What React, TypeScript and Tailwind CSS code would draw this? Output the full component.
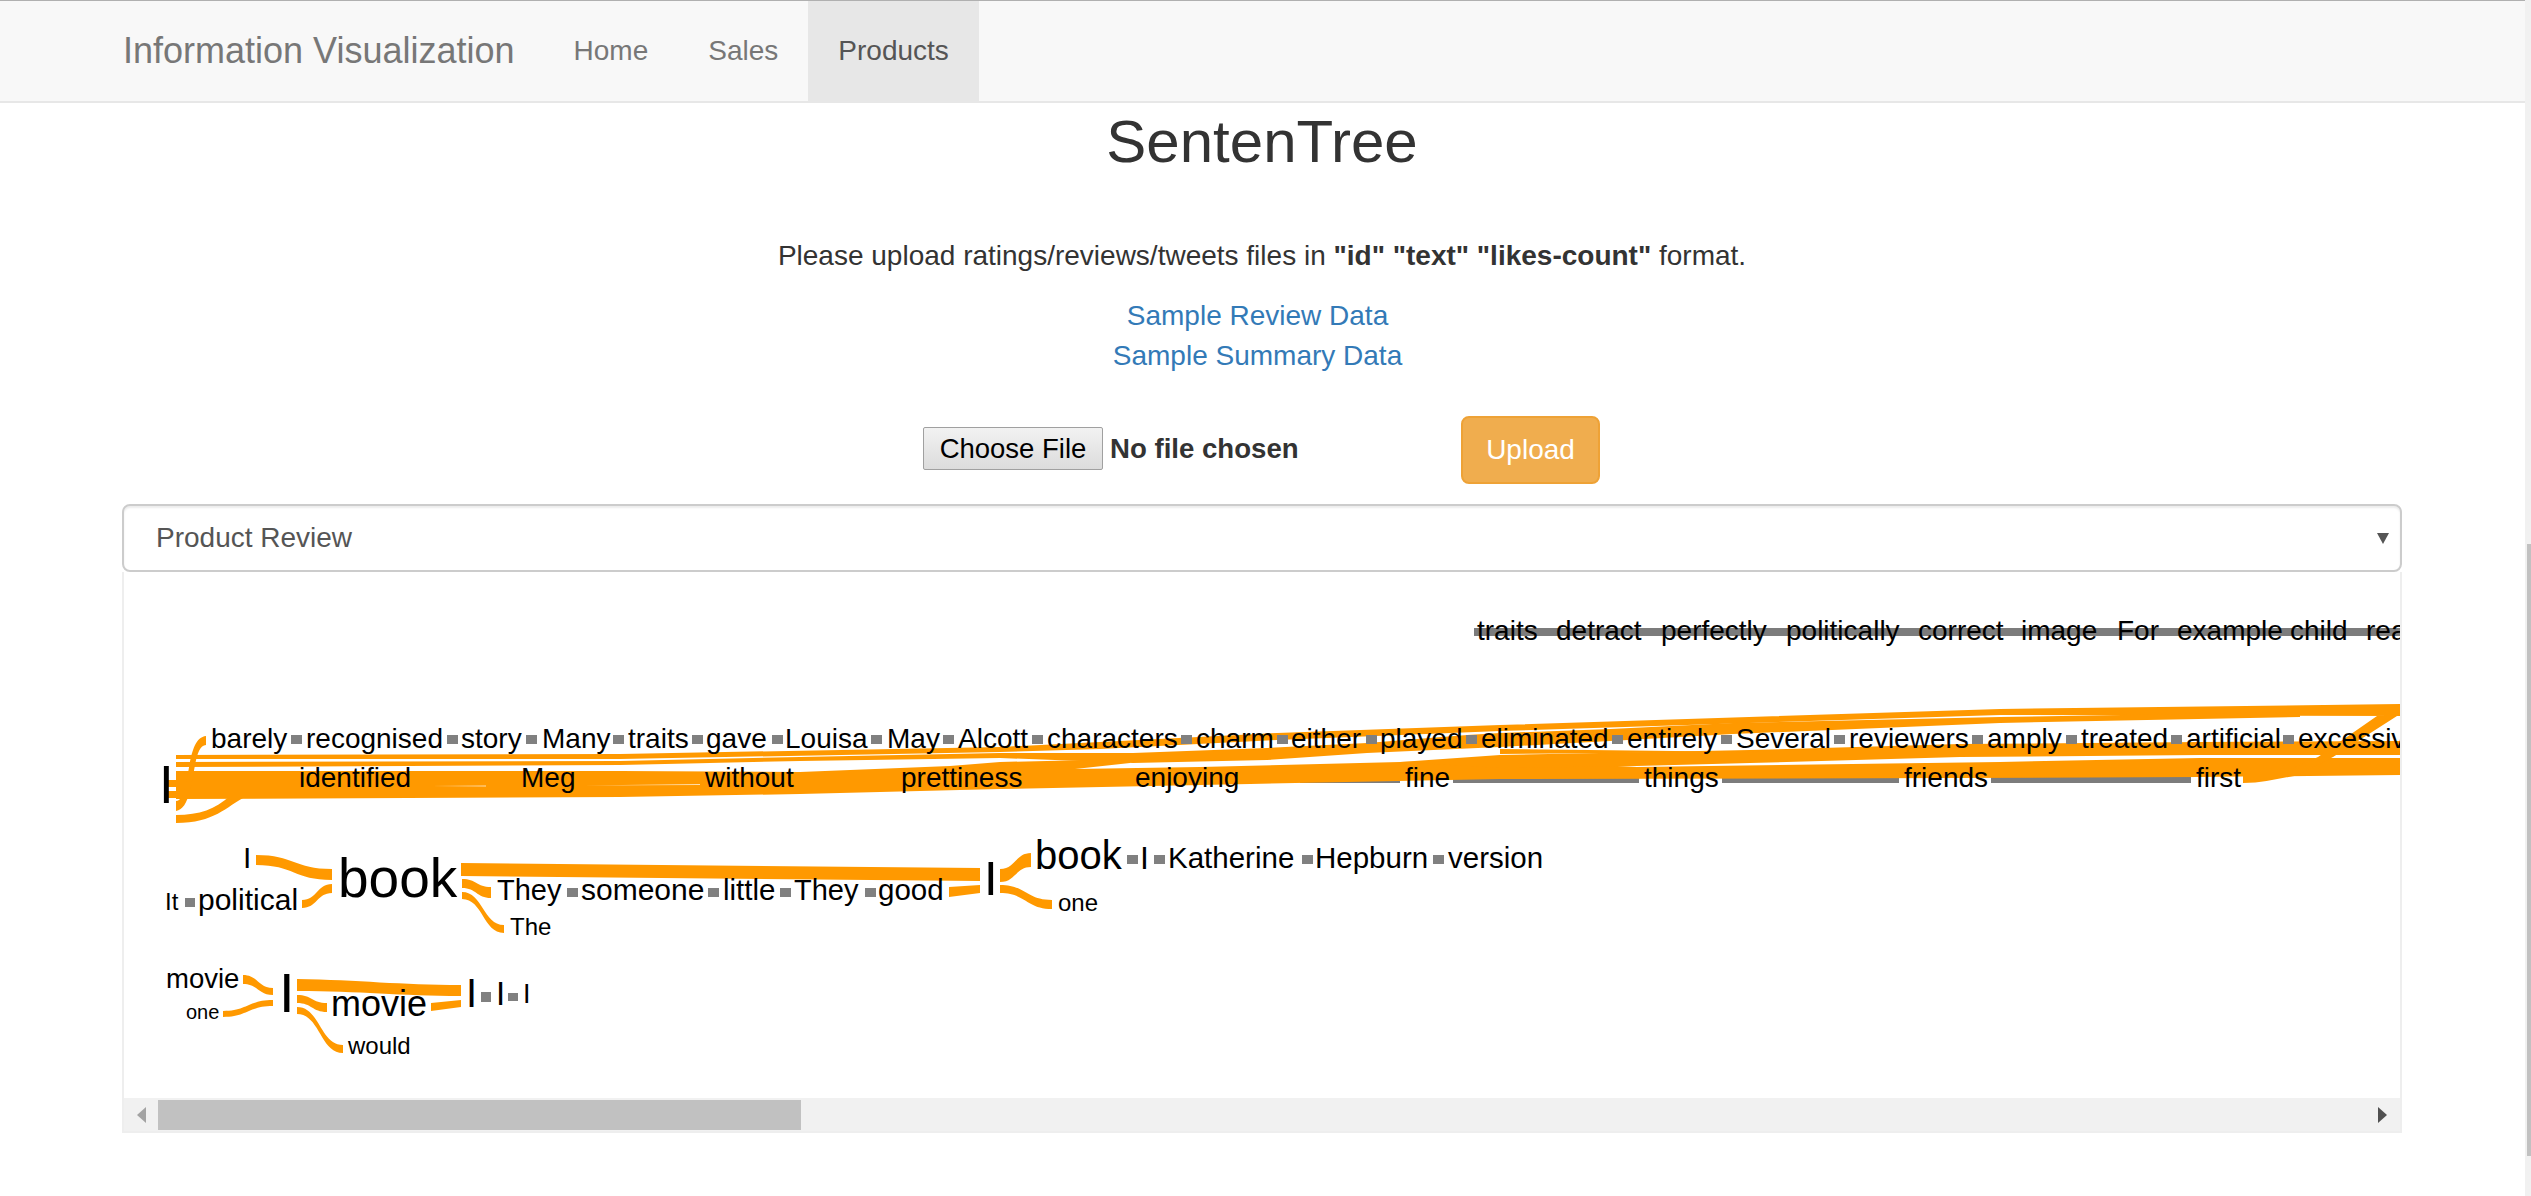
import React from 'react';

const ORANGE = '#ff9900';
const GREY = '#7c7c7c';

// S-curved ribbon between two vertical edges
const ribbon = (x0: number, a0: number, b0: number, x1: number, a1: number, b1: number) => {
    const m = (x0 + x1) / 2;
    return `M${x0} ${a0}C${m} ${a0} ${m} ${a1} ${x1} ${a1}L${x1} ${b1}C${m} ${b1} ${m} ${b0} ${x0} ${b0}Z`;
};

const bands: string[] = [
    // thin top band
    '176,755 620,754 1000,747 1100,742 1277,733 1500,725 2000,709 2400,704 2400,716 2000,715 1500,731 1277,740 1100,749 1000,752 620,759 176,759',
    // second band
    '176,762 620,761 800,757 1000,753 1133,753 1267,748 1367,743 1467,735 1500,733 1610,729 1733,723 2000,717 2300,712 2300,717 2000,723 1733,734 1610,741 1500,747 1367,753 1267,760 1133,763 1000,758 800,761 620,765 176,767',
    // main ribbon
    '176,771 620,771 800,772 950,766 1000,762 1130,759 1130,763 1075,769 1200,767 1400,762 1500,760 1637,767 2000,762 2200,758 2400,758 2400,775 2200,777 1960,778 1500,779 1250,784 1000,789 800,794 620,797 176,799',
    // upper limb of main ribbon
    '1400,762 1500,755 1750,750 1960,744 2200,742 2400,741 2400,755 2200,755 1960,757 1750,763 1637,766 1500,768',
    // wisp under "entirely"
    '1500,749 1760,752 1500,754',
    // diagonal at the right edge
    '2377,716 2397,716 2333,757 2295,776 2275,776 2318,757',
    // stubs next to the root word
    '168,780 177,780 177,787 168,787',
    '168,791 177,791 177,798 168,798',
];

const curves: string[] = [
    'M176 811C197 808 190 745 206 745L206 736C184 738 192 800 176 801Z',
    'M176 823C215 823 225 807 247 796L230 796C215 809 200 815 176 815Z',
    'M2243 770L2300 770L2300 775C2280 778 2265 783 2243 783Z',
    ribbon(256, 855, 865, 332, 869, 880),
    ribbon(302, 900, 908, 332, 884, 893),
    'M461 863L980 868L980 881L461 876Z',
    ribbon(462, 879, 888, 491, 887, 898),
    ribbon(462, 892, 899, 504, 925, 933),
    'M949 887L980 885L980 893L949 897Z',
    ribbon(1000, 869, 882, 1031, 853, 867),
    ribbon(1000, 885, 893, 1052, 900, 909),
    ribbon(243, 975, 984, 273, 988, 995),
    ribbon(223, 1011, 1017, 273, 1000, 1006),
    'M297 979C360 980 400 985 461 985L461 996C400 996 360 991 297 991Z',
    ribbon(297, 995, 1003, 327, 1003, 1012),
    ribbon(297, 1007, 1014, 343, 1045, 1053),
    'M431 1003L461 1000L461 1007L431 1011Z',
];

// [x, y, width, height]
const squares: number[][] = [
    [291, 735, 11, 9], [447, 735, 11, 9], [526, 735, 11, 9], [613, 735, 11, 9], [692, 735, 11, 9], [772, 735, 11, 9],
    [871, 735, 11, 9], [943, 735, 11, 9], [1032, 735, 11, 9], [1181, 735, 11, 9], [1277, 735, 11, 9], [1366, 735, 11, 9],
    [1466, 735, 11, 9], [1612, 735, 11, 9], [1721, 735, 11, 9], [1834, 735, 11, 9], [1972, 735, 11, 9], [2066, 735, 11, 9],
    [2171, 735, 11, 9], [2283, 735, 11, 9],
    [185, 898, 10, 9], [567, 888, 11, 9], [708, 888, 11, 9], [780, 888, 11, 9], [865, 888, 11, 9],
    [1127, 855, 11, 9], [1154, 855, 11, 9], [1302, 855, 11, 9], [1433, 855, 11, 9],
    [481, 992, 10, 10], [508, 993, 10, 8],
];

// [word, x, baseline, font size]
const words: [string, number, number, number][] = [
    ['traits', 1477, 640, 28], ['detract', 1556, 640, 28], ['perfectly', 1661, 640, 28], ['politically', 1786, 640, 28],
    ['correct', 1918, 640, 28], ['image', 2021, 640, 28], ['For', 2117, 640, 28], ['example', 2177, 640, 28],
    ['child', 2290, 640, 28], ['reading', 2366, 640, 28],
    ['barely', 211, 748, 28], ['recognised', 306, 748, 28], ['story', 461, 748, 28], ['Many', 542, 748, 28],
    ['traits', 628, 748, 28], ['gave', 706, 748, 28], ['Louisa', 785, 748, 28], ['May', 887, 748, 28],
    ['Alcott', 958, 748, 28], ['characters', 1047, 748, 28], ['charm', 1196, 748, 28], ['either', 1291, 748, 28],
    ['played', 1380, 748, 28], ['eliminated', 1481, 748, 28], ['entirely', 1627, 748, 28], ['Several', 1736, 748, 28],
    ['reviewers', 1849, 748, 28], ['amply', 1987, 748, 28], ['treated', 2081, 748, 28], ['artificial', 2186, 748, 28],
    ['excessive', 2298, 748, 28],
    ['identified', 299, 787, 28], ['Meg', 521, 787, 28], ['without', 705, 787, 28], ['prettiness', 901, 787, 28],
    ['enjoying', 1135, 787, 28], ['fine', 1405, 787, 28], ['things', 1644, 787, 28], ['friends', 1904, 787, 28],
    ['first', 2196, 787, 28],
    ['I', 159, 803, 53],
    ['I', 243, 868, 30], ['It', 165, 910, 24], ['political', 198, 910, 30], ['book', 338, 897, 55],
    ['They', 497, 900, 29], ['someone', 581, 900, 30], ['little', 723, 900, 29.5], ['They', 794, 900, 29], ['good', 878, 900, 29.5],
    ['The', 510, 935, 24], ['I', 984, 895, 49], ['book', 1035, 869, 40], ['I', 1140, 869, 32],
    ['Katherine', 1168, 868, 29.5], ['Hepburn', 1315, 868, 29.5], ['version', 1448, 868, 29.5], ['one', 1058, 911, 24],
    ['movie', 166, 988, 27.5], ['one', 186, 1019, 20], ['I', 279, 1012, 56], ['movie', 331, 1016, 36], ['would', 348, 1054, 24],
    ['I', 466, 1007, 40], ['I', 496, 1005, 33], ['I', 523, 1003, 27],
];

const SentenTreeChart: React.FC = () => (
    <svg className="block" width={2276} height={526} viewBox="124 572 2276 526">
        <rect x={1474} y={628} width={926} height={8} fill={GREY} />
        <rect x={1300} y={776} width={100} height={7} fill={GREY} />
        <rect x={1453} y={777} width={186} height={6} fill={GREY} />
        <rect x={1722} y={777} width={177} height={6} fill={GREY} />
        <rect x={1991} y={776} width={200} height={7} fill={GREY} />
        {bands.map((points, i) => (
            <polygon key={i} points={points} fill={ORANGE} />
        ))}
        {curves.map((d, i) => (
            <path key={i} d={d} fill={ORANGE} />
        ))}
        <path d="M432 786L486 785.5L486 786.5Z M584 785.5L700 784L700 785Z" fill="#ffe0b0" />
        {squares.map(([x, y, w, h], i) => (
            <rect key={i} x={x} y={y} width={w} height={h} fill="#808080" />
        ))}
        {words.map(([word, x, y, size], i) => (
            <text key={i} x={x} y={y} fontSize={size} fill="#000">
                {word}
            </text>
        ))}
    </svg>
);

const App: React.FC = () => {
    return (
        <div className="flex h-[1196px] overflow-hidden bg-white font-['Liberation_Sans',Arial,sans-serif] text-[28px] leading-[40px] text-[#333]">
            <div className="w-[2525px] shrink-0">
                <nav className="flex h-[103px] border-t border-b-2 border-t-[#b0b0b0] border-b-[#e7e7e7] bg-[#f8f8f8] pl-[123px] text-[#777]">
                    <a className="pr-[29px] text-[36px] leading-[100px]">Information Visualization</a>
                    <a className="px-[30px] leading-[100px]">Home</a>
                    <a className="px-[30px] leading-[100px]">Sales</a>
                    <a className="bg-[#e7e7e7] px-[30px] leading-[100px] text-[#555]">Products</a>
                </nav>

                <div className="ml-[122px] w-[2280px]">
                    <h1 className="mt-[6px] text-center text-[60px] leading-[66px]">SentenTree</h1>
                    <p className="mt-[61px] text-center">
                        Please upload ratings/reviews/tweets files in <b>"id" "text" "likes-count"</b> format.
                    </p>
                    <div className="mt-[20px] flex flex-col items-center pr-[9px] text-[#337ab7]">
                        <a>Sample Review Data</a>
                        <a>Sample Summary Data</a>
                    </div>

                    <div className="mt-[40px] flex h-[68px] items-center pl-[801px]">
                        <button className="mb-[3px] h-[43px] w-[180px] rounded-[2px] border border-[#a0a0a0] bg-gradient-to-b from-[#f2f2f2] to-[#dcdcdc] text-[27.5px] leading-none text-black">
                            Choose File
                        </button>
                        <span className="mb-[3px] ml-[7px] w-[188px] text-[27.6px] font-bold whitespace-nowrap">No file chosen</span>
                        <button className="ml-[163px] h-[68px] w-[139px] rounded-[8px] border-2 border-[#eea236] bg-[#f0ad4e] text-white">
                            Upload
                        </button>
                    </div>

                    <div className="mt-[20px] flex h-[68px] items-center justify-between rounded-[8px] border-2 border-[#ccc] pr-[11px] pl-[32px] text-[#555] shadow-[inset_0_2px_2px_rgba(0,0,0,0.08)]">
                        <span>Product Review</span>
                        <svg width="12" height="11" viewBox="0 0 12 11">
                            <path d="M0 0H12L6 11Z" fill="#555" />
                        </svg>
                    </div>

                    <div className="border-x-2 border-b-2 border-[#eee]">
                        <div className="h-[526px] overflow-hidden">
                            <SentenTreeChart />
                        </div>
                        <div className="flex h-[33px] items-center bg-[#f1f1f1]">
                            <div className="flex w-[34px] justify-center">
                                <svg width="9" height="16" viewBox="0 0 9 16">
                                    <path d="M9 0V16L0 8Z" fill="#a3a3a3" />
                                </svg>
                            </div>
                            <div className="h-[30px] w-[643px] bg-[#c1c1c1]" />
                            <div className="flex flex-1 justify-end pr-[13px]">
                                <svg width="9" height="16" viewBox="0 0 9 16">
                                    <path d="M0 0V16L9 8Z" fill="#505050" />
                                </svg>
                            </div>
                        </div>
                    </div>
                </div>
            </div>

            <div className="flex-1 bg-[#f1f1f1] pt-[544px] pl-[2px]">
                <div className="h-[612px] bg-[#c1c1c1]" />
            </div>
        </div>
    );
};

export default App;
